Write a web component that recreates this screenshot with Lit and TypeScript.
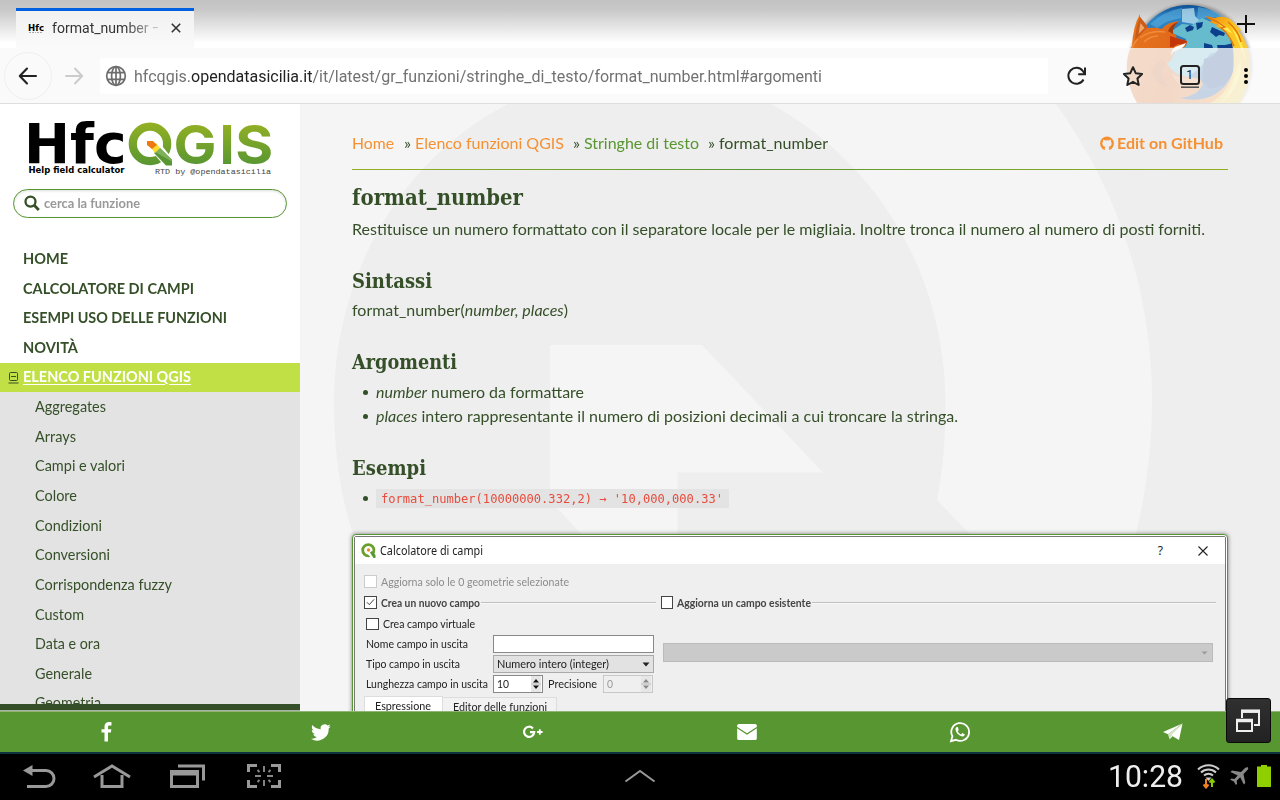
import { LitElement, html, css, svg } from "lit";
import { customElement, property } from "lit/decorators.js";

/* Text run set to an exact measure, in pixels. */
@customElement("fit-text")
class FitText extends LitElement {
  @property({ type: Number }) w = 0;
  static styles = css`
    :host { display: inline-block; white-space: nowrap; flex: none; }
    .run { display: inline-block; transform-origin: 0 50%; }
  `;
  render() {
    return html`<span class="run"><slot></slot></span>`;
  }
  firstUpdated() {
    const run = this.renderRoot.querySelector(".run") as HTMLElement;
    const natural = run.getBoundingClientRect().width;
    this.style.width = this.w + "px";
    if (natural > 0) run.style.transform = `scaleX(${this.w / natural})`;
  }
}

const fit = (text: unknown, w: number) => html`<fit-text .w=${w}>${text}</fit-text>`;

@customElement("browser-chrome")
class BrowserChrome extends LitElement {
  static styles = css`
    :host { display: block; position: relative; height: 104px; overflow: hidden; font-family: Roboto, sans-serif; }
    .persona { position: absolute; left: 1118px; top: 0; }
    .tabs { height: 48px; background: linear-gradient(#c2c2c2 0, #c9c9c9 10px, #fff 43px); display: flex; padding: 8px 0 0 16px; box-sizing: border-box; }
    .tab { position: relative; width: 178px; box-sizing: border-box; border-top: 3px solid #0060df; background: linear-gradient(#f1f1f1, #fafafa); display: flex; align-items: center; padding: 0 0 3px 12px; font-size: 14px; color: #333; }
    .fav { width: 16px; height: 12px; margin-right: 8px; display: block; }
    .title { flex: none; width: 106px; height: 20px; line-height: 20px; overflow: hidden; -webkit-mask-image: linear-gradient(90deg, #000 72px, transparent 115px); }
    .x { margin-left: 11px; }
    .bar { position: relative; height: 56px; box-sizing: border-box; background: rgba(249, 249, 250, 0.78); border-bottom: 1px solid #dedede; display: flex; align-items: center; padding-left: 4px; }
    .back { width: 48px; height: 48px; box-sizing: border-box; border: 1px solid #f0f0f0; border-radius: 50%; display: grid; place-items: center; background: #fafafa; }
    .fwd { margin-left: 10px; }
    .url { margin-left: 14px; width: 948px; height: 36px; border-radius: 2px; background: #fff; display: flex; align-items: center; gap: 7px; padding: 1px 0 0 5px; box-sizing: border-box; font-size: 16px; color: #727272; }
    .host { color: #222; }
    .reload { margin-left: 18px; }
    .star { margin-left: 33px; }
    .count { margin-left: 34px; }
    .more { margin-left: 40px; }
    .plus { position: absolute; left: 1237px; top: 15px; }
    svg { display: block; flex: none; }
  `;
  render() {
    return html`
      <div class="tabs">
        <div class="tab">
          <svg class="fav" viewBox="0 0 16 12"><text x="0" y="8.500" textLength="16" lengthAdjust="spacingAndGlyphs" font-family="DejaVu Sans" font-weight="700" font-size="8.5">Hfc</text><path d="M1 10.500h7M9 10.500h6" stroke="#aaa" stroke-width="1" stroke-dasharray="2 1" /></svg>
          <div class="title">${fit("format_number —", 111)}</div>
          <svg class="x" width="14" height="14" viewBox="0 0 14 14"><path d="M2.800 2.800l8.400 8.400M11.200 2.800l-8.400 8.400" stroke="#333" stroke-width="1.600" /></svg>
        </div>
      </div>
      <svg class="persona" width="145" height="104" viewBox="1118 0 145 104">
        <defs>
          <linearGradient id="gl" x1="0" y1="0" x2="0" y2="1"><stop offset="0" stop-color="#0d4f95" /><stop offset=".12" stop-color="#2f86c4" /><stop offset=".3" stop-color="#2a78bb" /><stop offset="1" stop-color="#0f4c97" /></linearGradient>
          <linearGradient id="fx" x1="0" y1="0" x2="1" y2=".4"><stop offset="0" stop-color="#e8771e" /><stop offset=".6" stop-color="#dd6418" /><stop offset="1" stop-color="#ee8a20" /></linearGradient>
          <linearGradient id="tl" x1="0" y1="0" x2=".6" y2="1"><stop offset="0" stop-color="#ee8512" /><stop offset=".35" stop-color="#fdc31c" /><stop offset="1" stop-color="#f7d04a" /></linearGradient>
          <filter id="soft" x="-20%" y="-20%" width="140%" height="140%"><feGaussianBlur stdDeviation="1.600" /></filter>
        </defs>
        <circle cx="1190" cy="66" r="62" fill="#444" opacity=".4" filter="url(#soft)" />
        <ellipse cx="1188" cy="58" rx="53" ry="53" fill="url(#gl)" />
        <path d="M1150 24q14-13 32-16l-1 10q-14 2-24 10zM1198 7q16 2 26 10l-16 0-11 4z" fill="#5aaede" opacity=".6" />
        <path d="M1182 9l12-1 1 8 5 5-6 3-12-2z" fill="#bfe3f2" opacity=".75" />
        <path d="M1173 30l9-6 10 1 10-7 14 6 12 6 4 18-22 6-10 14-16 12-16-6-2-16 20-16 0-3-14-6z" fill="#66bccd" />
        <path d="M1185 28l5-3 4 2-1 3-6 2zM1196 23l7-1-1 5-5 3zM1212 27l13 6-1 3-5-1-3 2-6-5zM1204 43l8 2 1 3h-9zM1217 45l8 0 9-2-1 30-9 12-14 4-8-8 2-22 9-3 5-6z" fill="#0d3f8c" />
        <path d="M1140 17q5 6 8 11 8-1 14 1 5-7 17-8-7 6-6 12 5 3 3 5l11 3-1 5q-5 4-11 5l-2 5q-2 6-6 7 2 5 5 7 5 6 17 7 12 0 14 7-5 12-23 14 26 6 42-9 13-12 14-34 10 14 6 28-3 16-12 27h-88q-13-16-15-38-1-17 5-26 1-20 8-32z" fill="url(#fx)" />
        <path d="M1162 60q-10 4-9 13 2 12 17 14-8-6-8-14 0-5 4-9z" fill="#b54f1c" opacity=".55" />
        <path d="M1172 73q6 5 17 5 9 0 12 5-8 6-18 3-9-4-11-13z" fill="#f6a55e" opacity=".6" />
        <path d="M1140 17q5 6 8 10l-13 13q1-14 5-23z" fill="#c95d18" /><path d="M1140.500 23l4 5-6 6z" fill="#f1a36a" />
        <path d="M1178 22q-6 6-5 12l-5-3q3-7 10-9z" fill="#9e3e10" />
        <path d="M1170 36q4 1 6 2l11 3-1 4-8-1-5 3-3 0z" fill="#c2360a" />
        <path d="M1175 47l11-4q-2 5-8 7l-5 2-2 4q0-6 4-9z" fill="#fff" />
        <path d="M1140 38q10-8 25-6M1144 42q6-6 14-6M1132 50q2-8 6-11" stroke="#f59a4c" stroke-width="1.500" fill="none" opacity=".7" />
        <path d="M1205 16l10 2q7-3 15 1l12 12-4-1q10 12 12 30 1 24-11 44h-30q19-10 24-32 2-14-1-29l-6-12-11-5 3-1-9-3 3-1z" fill="url(#tl)" />
        <path d="M1214 20q12 4 19 14l-9-5zM1232 28q12 12 13 32l-7-19zM1241 60q2 26-21 44 14-16 15-32z" fill="#fff15a" opacity=".85" />
        <path d="M1207 17q10 4 18 10l-4 1q8 6 13 18M1228 22q10 8 13 20" fill="none" stroke="#e0760c" stroke-width="1.500" />
      </svg>
      <div class="bar">
        <div class="back"><svg width="20" height="18" viewBox="0 0 20 18"><path d="M18 9H2M9 1.500L1.800 9L9 16.500" fill="none" stroke="#222" stroke-width="2.100" stroke-linecap="round" stroke-linejoin="round" /></svg></div>
        <svg class="fwd" width="24" height="18" viewBox="0 0 24 18"><path d="M4 9h16M13 1.500L20.200 9L13 16.500" fill="none" stroke="#ccc" stroke-width="2" stroke-linecap="round" stroke-linejoin="round" /></svg>
        <div class="url">
          <svg width="22" height="22" viewBox="0 0 22 22"><g fill="none" stroke="#6d6d6d" stroke-width="1.700"><circle cx="11" cy="11" r="9.300" /><ellipse cx="11" cy="11" rx="4.400" ry="9.300" /><path d="M11 1.500v19M2.500 7.600h17M2.500 14.400h17" /></g></svg>
          ${fit(html`hfcqgis.<span class="host">opendatasicilia.it</span>/it/latest/gr_funzioni/stringhe_di_testo/format_number.html#argomenti`, 688)}
        </div>
        <svg class="reload" width="22" height="22" viewBox="0 0 22 22"><path d="M17.500 14.500A8 8 0 1 1 16.800 6L18.500 8.300" fill="none" stroke="#222" stroke-width="2" /><path d="M19 2.500V9.300H12.200" fill="none" stroke="#222" stroke-width="2" /></svg>
        <svg class="star" width="24" height="24" viewBox="0 0 24 24"><path d="M12 3.200l2.700 6 6.400.8-4.700 4.400 1.300 6.600-5.700-3.200-5.700 3.200 1.300-6.600L2.900 10l6.400-.8z" fill="none" stroke="#222" stroke-width="2" stroke-linejoin="round" /></svg>
        <svg class="count" width="22" height="26" viewBox="0 0 22 26"><rect x="2" y="3" width="18" height="18" rx="2.500" fill="none" stroke="#222" stroke-width="2" /><path d="M2 24.200h18" stroke="#555" stroke-width="1.600" /><text x="10.700" y="16.200" text-anchor="middle" font-family="Roboto" font-size="12" fill="#222">1</text></svg>
        <svg class="more" width="10" height="20" viewBox="0 0 10 20"><circle cx="5" cy="4" r="2" /><circle cx="5" cy="10" r="2" /><circle cx="5" cy="16" r="2" /></svg>
      </div>
      <svg class="plus" width="18" height="18" viewBox="0 0 18 18"><path d="M9 0v18M0 9h18" stroke="#111" stroke-width="2" /></svg>
    `;
  }
}

@customElement("side-nav")
class SideNav extends LitElement {
  static styles = css`
    :host { display: flex; flex-direction: column; width: 300px; height: 607px; background: #fff; color: #354f28; font-family: Lato, sans-serif; font-size: 14.4px; overflow: hidden; }
    svg { display: block; flex: none; }
    .logo { height: 85px; flex: none; }
    .search { flex: none; margin: 0 13px; height: 29px; box-sizing: border-box; border: 1px solid #589632; border-radius: 15px; box-shadow: inset 0 1px 3px #ddd; display: flex; align-items: center; padding: 0 0 1px 10px; gap: 4px; font-size: 12.8px; font-weight: 700; color: #999; }
    .menu { margin-top: 26px; height: 460px; overflow: hidden; }
    .row { height: 29.64px; line-height: 29.4px; padding-left: 23px; }
    .top { font-weight: 700; }
    .cur { background: #c1e045; color: #fff; padding-left: 8px; display: flex; line-height: 28.6px; }
    .cur .name { text-decoration: underline; text-underline-offset: 2px; text-decoration-thickness: 1px; }
    .box { width: 11px; margin-right: 4px; padding-top: 9px; }
    .sub { background: #e3e3e3; padding-left: 35px; }
    .foot { flex: none; height: 7px; box-sizing: border-box; background: #354f28; border-bottom: 1px solid #a9b3a4; }
  `;
  render() {
    const tops: [string, number][] = [["HOME", 45], ["CALCOLATORE DI CAMPI", 171], ["ESEMPI USO DELLE FUNZIONI", 204], ["NOVITÀ", 55]];
    const subs: [string, number][] = [["Aggregates", 71], ["Arrays", 41], ["Campi e valori", 90], ["Colore", 42], ["Condizioni", 67], ["Conversioni", 75], ["Corrispondenza fuzzy", 137], ["Custom", 49], ["Data e ora", 65], ["Generale", 57], ["Geometria", 66]];
    return html`
      <svg class="logo" width="300" height="85" viewBox="0 104 300 85">
        <defs><linearGradient id="g" gradientUnits="userSpaceOnUse" x1="0" y1="123" x2="0" y2="165"><stop offset="0" stop-color="#93b023" /><stop offset="1" stop-color="#589632" /></linearGradient></defs>
        <text x="24" y="163.200" textLength="102.500" lengthAdjust="spacingAndGlyphs" font-family="DejaVu Sans" font-weight="700" font-size="55.5">Hfc</text>
        <circle cx="150" cy="143.900" r="17.200" fill="none" stroke="url(#g)" stroke-width="8.200" />
        <path d="M150 139l8 2 18 22v5h-10l-17-20z" fill="#fff" />
        <path d="M154 153l6-5 12 12v5.500h-6z" fill="#589632" /><path d="M155 152l5-4 12 11.500v2z" fill="#7fb05c" />
        <path d="M151 148l4 5 5-5-4-5z" fill="#fdde2e" />
        <path d="M147 141h6l4 4-5 4-5-4z" fill="#ee7913" />
        <g font-family="Inter" font-weight="700" font-size="54" fill="url(#g)">
          <text x="173.500" y="163.700" textLength="43" lengthAdjust="spacingAndGlyphs">G</text>
          <text x="219.500" y="163.700">I</text>
          <text x="235.300" y="163.700" textLength="38" lengthAdjust="spacingAndGlyphs">S</text>
        </g>
        <text x="28.500" y="173.200" textLength="96" lengthAdjust="spacingAndGlyphs" font-family="DejaVu Sans" font-weight="700" font-size="8.6">Help field calculator</text>
        <text x="155" y="173.500" textLength="116" lengthAdjust="spacingAndGlyphs" font-family="Liberation Mono" font-size="8" fill="#444">RTD by @opendatasicilia</text>
      </svg>
      <div class="search">
        <svg width="16" height="16" viewBox="0 0 16 16"><circle cx="6.500" cy="6.600" r="5" fill="none" stroke="#354f28" stroke-width="2.300" /><path d="M10.200 10.300l4.600 4.600" stroke="#354f28" stroke-width="2.800" /></svg>
        ${fit("cerca la funzione", 96)}
      </div>
      <div class="menu">
        ${tops.map(([s, w]) => html`<div class="row top">${fit(s, w)}</div>`)}
        <div class="row top cur">
          <svg class="box" width="11" height="12" viewBox="0 0 11 12"><rect x="1.500" y=".5" width="8" height="8" rx="1" fill="none" stroke="#354f28" /><path d="M3 4.500h5M.5 11h10" stroke="#354f28" /></svg>
          ${fit(html`<span class="name">ELENCO FUNZIONI QGIS</span>`, 168)}
        </div>
        ${subs.map(([s, w]) => html`<div class="row sub">${fit(s, w)}</div>`)}
      </div>
      <div class="foot"></div>
    `;
  }
}

@customElement("field-dialog")
class FieldDialog extends LitElement {
  static styles = css`
    :host { display: block; height: 240px; box-sizing: border-box; border: 1.5px solid #589632; border-radius: 4px; background: #fff; padding: 1px; box-shadow: 0 0 4px rgba(0, 0, 0, 0.5); font-family: Lato, sans-serif; font-size: 11.6px; color: #222; }
    svg { display: block; flex: none; }
    .win { height: 100%; box-sizing: border-box; border: 1px solid #777; border-radius: 2px 2px 0 0; background: #efefef; }
    .bar { height: 27px; background: #fff; display: flex; align-items: center; padding: 0 16px 0 6px; font-family: "Noto Sans", sans-serif; font-size: 12px; color: #222; }
    .name { margin-left: 4px; flex: 1; }
    .q { font-size: 12px; margin-right: 34px; }
    .in { padding: 7px 9px 0 9px; }
    .line { display: flex; align-items: center; height: 21px; }
    .ck { width: 12.500px; height: 12.500px; box-sizing: border-box; border: 1px solid #444; background: #fff; flex: none; margin-right: 4px; }
    .off { border-color: #ccc; }
    .muted { color: #8c8c8c; }
    b { font-weight: 700; color: #444; }
    .rule { height: 1px; background: #c0c0c0; border-bottom: 1px solid #f8f8f8; margin: 0 5px 0 1px; }
    .r1 { width: 175px; }
    .r2 { flex: 1; margin-right: 0; }
    .cols { display: flex; padding-top: 1px; }
    .left { width: 291px; padding-left: 2px; box-sizing: border-box; }
    .left .line { height: 20px; }
    .lab { width: 127px; }
    .inp { width: 161px; height: 18px; box-sizing: border-box; border: 1px solid #888; background: #fff; flex: none; display: flex; align-items: center; justify-content: space-between; padding: 0 3px; }
    .sel { background: #e2e2e2; border-color: #aaa; }
    .spin { width: 50px; padding-right: 1px; }
    .dis { background: #efefef; border-color: #c8c8c8; color: #999; }
    .prec { margin: 0 6px 0 5px; }
    .combo { margin: 29px 0 0 8px; width: 550px; height: 19px; box-sizing: border-box; border: 1px solid #bbb; background: #cacaca; display: flex; justify-content: flex-end; align-items: center; padding-right: 4px; }
    .tabs { display: flex; padding-top: 2px; align-items: flex-start; }
    .tab { height: 30px; width: 79px; box-sizing: border-box; background: #fff; border: 1px solid #ddd; line-height: 18px; padding-left: 10px; }
    .t2 { width: 114px; background: #f2f2f2; margin-top: 1px; border-left: 0; padding-left: 10px; line-height: 17px; }
  `;
  spin(c: string) {
    return html`<svg width="10" height="16" viewBox="0 0 10 16"><rect width="10" height="16" fill="#e6e6e6" /><path d="M5 3l3 3.500H2zM5 13l3-3.500H2z" fill=${c} /><path d="M0 8h10" stroke="#aaa" stroke-width=".7" /></svg>`;
  }
  render() {
    return html`<div class="win">
      <div class="bar">
        <svg width="15" height="15" viewBox="0 0 15 15"><circle cx="7.300" cy="7.300" r="5.600" fill="none" stroke="#6a9f2c" stroke-width="2.800" /><path d="M7 7l7.500 8h-4l-4-4z" fill="#fff" /><path d="M9 9.500l2-1.500 3.500 4v3h-2z" fill="#589632" /><circle cx="7.500" cy="7" r="1.700" fill="#f08a24" /></svg>
        <div class="name">${fit("Calcolatore di campi", 103)}</div>
        <span class="q">?</span>
        <svg width="12" height="12" viewBox="0 0 12 12"><path d="M1.500 1.500l9 9M10.500 1.500l-9 9" stroke="#222" stroke-width="1.100" /></svg>
      </div>
      <div class="in">
        <div class="line muted"><i class="ck off"></i>${fit("Aggiorna solo le 0 geometrie selezionate", 188)}</div>
        <div class="line">
          <svg class="ck" viewBox="0 0 11 11"><path d="M2 5.500l2.500 2.500L9.500 2.500" fill="none" stroke="#333" /></svg><b>${fit("Crea un nuovo campo", 99)}</b><div class="rule r1"></div>
          <i class="ck"></i><b>${fit("Aggiorna un campo esistente", 134)}</b><div class="rule r2"></div>
        </div>
        <div class="cols">
          <div class="left">
            <div class="line"><i class="ck"></i>${fit("Crea campo virtuale", 92)}</div>
            <div class="line"><div class="lab">${fit("Nome campo in uscita", 102)}</div><div class="inp"></div></div>
            <div class="line"><div class="lab">${fit("Tipo campo in uscita", 94)}</div><div class="inp sel">${fit("Numero intero (integer)", 112)}<svg width="8" height="5" viewBox="0 0 8 5"><path d="M.5.5h7L4 4.500z" fill="#222" /></svg></div></div>
            <div class="line"><div class="lab">${fit("Lunghezza campo in uscita", 122)}</div><div class="inp spin">${fit("10", 12)}${this.spin("#111")}</div><span class="prec">${fit("Precisione", 49)}</span><div class="inp spin dis">${fit("0", 6)}${this.spin("#888")}</div></div>
          </div>
          <div class="combo"><svg width="7" height="4" viewBox="0 0 7 4"><path d="M.5.5h6L3.500 3.500z" fill="#999" /></svg></div>
        </div>
        <div class="tabs"><div class="tab">${fit("Espressione", 56)}</div><div class="tab t2">${fit("Editor delle funzioni", 94)}</div></div>
      </div>
    </div>`;
  }
}

@customElement("doc-page")
class DocPage extends LitElement {
  static styles = css`
    :host { display: block; position: relative; width: 980px; height: 607px; overflow: hidden; background: #eee; color: #354f28; font-family: Lato, sans-serif; font-size: 16px; line-height: 24px; }
    .mark { position: absolute; left: 0; top: 0; }
    article { position: relative; padding: 27px 52px 0; }
    nav { display: flex; height: 24px; align-items: center; }
    .o { color: #f59132; }
    .s { color: #589632; }
    .sep { margin: 0 4px 0 9px; }
    .sep.first { margin-left: 10px; }
    .edit { margin-left: auto; margin-right: 5px; display: flex; align-items: center; gap: 3px; font-weight: 700; }
    .hr { height: 1px; margin-top: 14px; background: linear-gradient(90deg, #93b023, #589632 45%, #93b023); }
    h1, h2 { margin: 0; font-family: "DejaVu Serif Condensed", "DejaVu Serif", serif; font-weight: 700; }
    h1 { font-size: 23px; line-height: 29px; height: 30px; margin-top: 12px; }
    h2 { font-size: 20px; line-height: 28px; margin-top: 25px; }
    p { margin: 4px 0 0; height: 24px; line-height: 22px; }
    .lead { margin-top: 6px; }
    ul { margin: 4px 0 0; padding: 0 0 1px; list-style: none; }
    li { height: 24px; display: flex; align-items: center; }
    li::before { content: ""; width: 5px; height: 5px; border-radius: 50%; background: #354f28; margin: 1px 8px 0 11px; }
    code { font-family: "DejaVu Sans Mono", monospace; font-size: 12px; line-height: 20px; color: #e74c3c; background: #e3e3e3; padding: 0 6px 0 5px; height: 19px; }
    field-dialog { margin-top: 23px; }
  `;
  render() {
    return html`
      <svg class="mark" width="980" height="607" viewBox="300 104 980 607">
        <path fill="#f5f5f5" fill-rule="evenodd" d="M300 104H1056C1114 185 1152 285 1152 400C1152 480 1135 560 1100 640L1070 711H300ZM508 104C400 160 334 275 334 404C334 450 340 495 353 534L400 640H1070L970 534L937 500C943 470 945.500 440 945.500 404C945.500 280 882 165 771 104Z" />
        <path fill="#f5f5f5" d="M550 345H702L823 472.500H677.500V534H581L550 500Z" />
      </svg>
      <article>
        <nav>
          <span class="o">${fit("Home", 42)}</span><span class="sep first">${fit("»", 7)}</span>
          <span class="o">${fit("Elenco funzioni QGIS", 149)}</span><span class="sep">${fit("»", 7)}</span>
          <span class="s">${fit("Stringhe di testo", 115)}</span><span class="sep">${fit("»", 7)}</span>
          ${fit("format_number", 109)}
          <span class="edit o">
            <svg width="14" height="15" viewBox="0 0 14 15"><circle cx="7" cy="7.500" r="6.900" fill="#f59132" /><path d="M3.300 3.400l2 1q1.700-.4 3.400 0l2-1q.5 1 .2 2.100 1 1.200.7 2.800-.4 2.200-3 2.600.6.6.6 1.500V15H4.800v-2.600q0-.9.6-1.500-2.600-.4-3-2.600-.3-1.600.7-2.800-.3-1.100.2-2.100z" fill="#eee" /></svg>
            ${fit("Edit on GitHub", 106)}
          </span>
        </nav>
        <div class="hr"></div>
        <h1>${fit("format_number", 171)}</h1>
        <p class="lead">${fit("Restituisce un numero formattato con il separatore locale per le migliaia. Inoltre tronca il numero al numero di posti forniti.", 853)}</p>
        <h2>${fit("Sintassi", 80)}</h2>
        <p>${fit(html`format_number(<em>number, places</em>)`, 216)}</p>
        <h2>${fit("Argomenti", 105)}</h2>
        <ul>
          <li>${fit(html`<em>number</em> numero da formattare`, 208)}</li>
          <li>${fit(html`<em>places</em> intero rappresentante il numero di posizioni decimali a cui troncare la stringa.`, 582)}</li>
        </ul>
        <h2>${fit("Esempi", 74)}</h2>
        <ul><li><code>${fit("format_number(10000000.332,2) → '10,000,000.33'", 342)}</code></li></ul>
        <field-dialog></field-dialog>
      </article>
    `;
  }
}

@customElement("app-root")
class AppRoot extends LitElement {
  static styles = css`
    :host { display: block; position: relative; width: 1280px; height: 800px; overflow: hidden; background: #fff; }
    svg { display: block; flex: none; }
    .page { display: flex; height: 607px; }
    .share { height: 41px; background: #589632; display: grid; grid-template-columns: repeat(6, 1fr); align-items: center; justify-items: center; box-sizing: border-box; border-top: 1px solid #8fb475; }
    .sys { height: 48px; box-sizing: border-box; border-top: 2px solid #0e3440; background: #000; display: flex; align-items: center; padding: 0 9px 2px 22px; font-family: Roboto, sans-serif; }
    .home { margin-left: 36px; }
    .rec { margin-left: 37px; }
    .cap { margin-left: 41px; }
    .up { margin-left: 343px; }
    .clock { margin-left: auto; color: #eee; font-size: 31px; line-height: 46px; padding-top: 2px; }
    .wifi { margin-left: 14px; }
    .air { margin-left: 9px; }
    .bat { margin-left: 8px; }
    .float { position: absolute; left: 1226px; top: 698px; width: 45px; height: 45px; box-sizing: border-box; border: 1px solid #0a0a0a; border-radius: 3px; background: linear-gradient(#303030, #222); display: grid; place-items: center; }
  `;
  render() {
    const icon = (body: unknown) => html`<svg width="22" height="22" viewBox="0 0 22 22">${body}</svg>`;
    return html`
      <browser-chrome></browser-chrome>
      <div class="page"><side-nav></side-nav><doc-page></doc-page></div>
      <div class="share">
        ${icon(svg`<path fill="#fff" d="M8.200 20.500v-9H5.200V8.200h3V5.600c0-3 1.800-4.500 4.400-4.500 1.300 0 2.300.1 2.600.2v3.100h-1.800c-1.400 0-1.700.7-1.700 1.700v2.100H15l-.4 3.300h-2.900v9z" transform="translate(.3 0)" />`)}
        ${icon(svg`<path transform="translate(.7 0)" fill="#fff" d="M21 5.200c-.7.300-1.500.5-2.300.6.800-.5 1.500-1.300 1.800-2.200-.8.500-1.700.8-2.600 1A4.050 4.050 0 0 0 11 8.300c-3.400-.2-6.300-1.800-8.300-4.200-1.100 1.900-.6 4.200 1.200 5.400-.7 0-1.300-.2-1.800-.5 0 2 1.400 3.700 3.200 4.100-.6.200-1.200.2-1.800.1.500 1.600 2 2.800 3.800 2.800A8.200 8.200 0 0 1 1.300 17.700 11.500 11.500 0 0 0 19 7.500c.8-.6 1.500-1.300 2-2.300z" />`)}
        ${icon(svg`<g transform="translate(1 0)"><path d="M9.900 7.400A5.100 5.100 0 1 0 11.200 11.200H7" fill="none" stroke="#fff" stroke-width="2.200" /><path d="M16.800 8.200v5.600M14 11h5.600" stroke="#fff" stroke-width="1.800" /></g>`)}
        ${icon(svg`<rect x="1.200" y="3" width="19.600" height="16" rx="1.600" fill="#fff" /><path d="M1 6.500l10 6.500 10-6.500" fill="none" stroke="#589632" stroke-width="1.400" />`)}
        ${icon(svg`<path d="M2 20.200l1.400-4.900a8.900 8.900 0 1 1 3.500 3.500z" fill="none" stroke="#fff" stroke-width="1.800" /><path fill="#fff" d="M8 6c-.8 0-1.700 1-1.500 2.500.5 3.300 3.400 6.300 6.700 6.900 1.500.2 2.700-.9 2.500-2.100l-2.400-1.200-1.200 1.300c-1.600-.6-2.800-1.900-3.400-3.200l1-1.200L8.800 6z" />`)}
        ${icon(svg`<path fill="#fff" d="M20.500 2.500L1 11l5 2.200z" /><path fill="#fff" d="M20.500 2.500L8.500 14l8.500 5z" /><path fill="#d5e5c9" d="M20.500 2.500L6 13.200l1.500 5.300 1.400-4.300z" /><path fill="#fff" d="M7.500 18.500l3-3.200-1.600-1.100z" />`)}
      </div>
      <div class="sys">
        <svg width="34" height="24" viewBox="0 0 34 24"><path d="M7 6.500h17a8 8 0 0 1 0 16H5" fill="none" stroke="#999" stroke-width="3" /><path d="M1 6.500L10.500 1v11z" fill="#999" /></svg>
        <svg class="home" width="40" height="26" viewBox="0 0 40 26"><path d="M2 14L20 3l18 11M10 12v11.500h20V12" fill="none" stroke="#999" stroke-width="3" /></svg>
        <svg class="rec" width="37" height="26" viewBox="0 0 37 26"><path d="M2.500 8.500h26v15h-26zM2.500 11h26" fill="none" stroke="#999" stroke-width="3" /><path d="M9 3h25.500v14.500" fill="none" stroke="#999" stroke-width="3" /></svg>
        <svg class="cap" width="34" height="26" viewBox="0 0 34 26"><path d="M1.500 9V2.500h8.500M24 2.500h8.500V9M1.500 17v6.500H10M24 23.500h8.500V17" fill="none" stroke="#999" stroke-width="3" /><path d="M17 3v6M17 17v6M8 13h6M20 13h6M10.500 7l2 2M23.500 7l-2 2M10.500 19l2-2M23.500 19l-2-2" stroke="#888" stroke-width="1.900" /></svg>
        <svg class="up" width="32" height="16" viewBox="0 0 32 16"><path d="M1.500 13.500L16 3l14.500 10.500" fill="none" stroke="#999" stroke-width="2" /></svg>
        <span class="clock">${fit("10:28", 75)}</span>
        <svg class="wifi" width="23" height="26" viewBox="0 0 23 26"><g fill="none" stroke="#ccc" stroke-width="2"><path d="M1 6.500a15 15 0 0 1 21 0" /><path d="M4 9.500a11 11 0 0 1 15 0" /><path d="M7 12.500a6.500 6.500 0 0 1 9 0" /></g><path d="M8.500 14.500h6l-3 3.500z" fill="#ccc" /><path d="M9 16v8M6.500 21.500L9 24.500l2.500-3" fill="none" stroke="#f08020" stroke-width="2" /><path d="M15 24v-6M12.500 19.500L15 16.500l2.500 3" fill="none" stroke="#8c0" stroke-width="2" /></svg>
        <svg class="air" width="20" height="22" viewBox="0 0 20 22"><path fill="#888" d="M19 2.500c.6.700 0 2-1 3L14.500 9l1.800 9-1.500 1.500-3.600-7.200-3.500 3.500.4 3L6.800 20l-1.900-3.500L1.200 14.800l1.200-1.200 3 .3 3.400-3.500L1.500 7 3 5.400l9 1.600 3.500-3.500c1-1 2.700-1.800 3.500-1z" /></svg>
        <svg class="bat" width="14" height="22" viewBox="0 0 14 22"><path fill="#8fce00" d="M4 0h6v1.500h4V22H0V1.500h4z" /></svg>
      </div>
      <div class="float"><svg width="27" height="26" viewBox="0 0 27 26"><path d="M7 10V3h17v14h-5" fill="none" stroke="#eee" stroke-width="2" /><path d="M6 3.200h19" stroke="#eee" stroke-width="3.500" /><path d="M2 12h15v11H2z" fill="none" stroke="#eee" stroke-width="2" /><path d="M1 12.500h17" stroke="#eee" stroke-width="3.500" /></svg></div>
    `;
  }
}
